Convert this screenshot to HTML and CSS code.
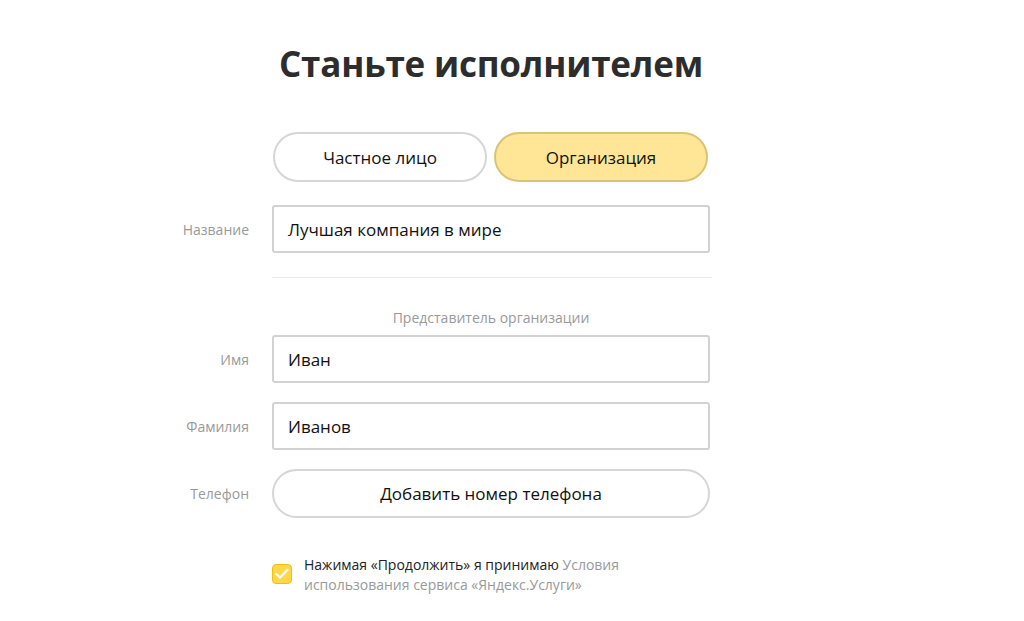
FILE: index.html
```html
<!DOCTYPE html>
<html lang="ru">
<head>
<meta charset="utf-8">
<link rel="stylesheet" href="styles.css">
</head>
<body>
<main class="form">
  <h1 class="title">Станьте исполнителем</h1>

  <div class="toggles">
    <button class="toggle">Частное лицо</button>
    <button class="toggle toggle-active">Организация</button>
  </div>

  <div class="row row-first">
    <div class="label">Название</div>
    <div class="input">Лучшая компания в мире</div>
  </div>

  <div class="divider"></div>

  <div class="subhead">Представитель организации</div>

  <div class="row row-name">
    <div class="label">Имя</div>
    <div class="input">Иван</div>
  </div>
  <div class="row">
    <div class="label">Фамилия</div>
    <div class="input">Иванов</div>
  </div>
  <div class="row">
    <div class="label">Телефон</div>
    <button class="phone">Добавить номер телефона</button>
  </div>

  <div class="agree">
    <span class="checkbox">
      <svg width="14" height="12" viewBox="0 0 14 12"><path d="M1.5 6.2 L5.2 9.6 L12.5 1.8" fill="none" stroke="#fff" stroke-width="2.2" stroke-linecap="round" stroke-linejoin="round"/></svg>
    </span>
    <div class="agree-text">
      <div class="agree-line">Нажимая «Продолжить» я принимаю <span class="muted">Условия</span></div>
      <div class="agree-line muted">использования сервиса «Яндекс.Услуги»</div>
    </div>
  </div>
</main>
</body>
</html>
```

FILE: styles.css
```css
* { box-sizing: border-box; }
html, body { margin: 0; padding: 0; background: #fff; }
body {
  font-family: "Open Sans", "Noto Sans", Arial, sans-serif;
  color: #000;
  width: 1024px;
  height: 621px;
  overflow: hidden;
}
.form {
  width: 438px;
  margin-left: 272px;
  padding-top: 40px;
}
.title {
  margin: 0;
  font-size: 35px;
  line-height: 48px;
  font-weight: 700;
  color: #2d2d2d;
  text-align: center;
  letter-spacing: -0.2px;
}
.toggles {
  display: flex;
  gap: 7px;
  padding: 0 2px 0 1px;
  margin-top: 44px;
}
.toggle {
  flex: 1;
  height: 50px;
  border-radius: 25px;
  border: 2px solid #d6d6d6;
  background: #fff;
  font-family: inherit;
  font-size: 17px;
  color: #111;
  padding: 0;
}
.toggle-active {
  background: #ffe696;
  border-color: #d9c475;
}
.row {
  position: relative;
  display: flex;
  align-items: center;
  margin-top: 19px;
}
.row-first { margin-top: 23px; }
.row-name { margin-top: 7px; }
.label {
  position: absolute;
  right: calc(100% + 23px);
  white-space: nowrap;
  font-size: 14px;
  color: #999;
}
.input {
  flex: 1;
  height: 48px;
  border: 2px solid #d2d2d2;
  border-radius: 3px;
  padding: 0 14px;
  display: flex;
  align-items: center;
  font-size: 17px;
  color: #111;
}
.divider {
  height: 1px;
  background: #ececec;
  margin-top: 24px;
  width: 440px;
}
.subhead {
  margin-top: 30px;
  text-align: center;
  font-size: 14px;
  line-height: 20px;
  color: #999;
}
.phone {
  flex: 1;
  height: 49px;
  border: 2px solid #d6d6d6;
  border-radius: 25px;
  background: #fff;
  font-family: inherit;
  font-size: 17px;
  color: #111;
  padding: 0;
}
.agree {
  display: flex;
  align-items: flex-start;
  gap: 12px;
  margin-top: 37px;
}
.checkbox {
  flex: none;
  width: 20px;
  height: 20px;
  margin-top: 9px;
  border-radius: 4px;
  background: #ffd84a;
  border: 1px solid #f0bf10;
  display: flex;
  align-items: center;
  justify-content: center;
}
.agree-text {
  font-size: 14px;
  line-height: 20px;
  color: #222;
}
.agree-line { white-space: nowrap; }
.muted { color: #999; }
```
